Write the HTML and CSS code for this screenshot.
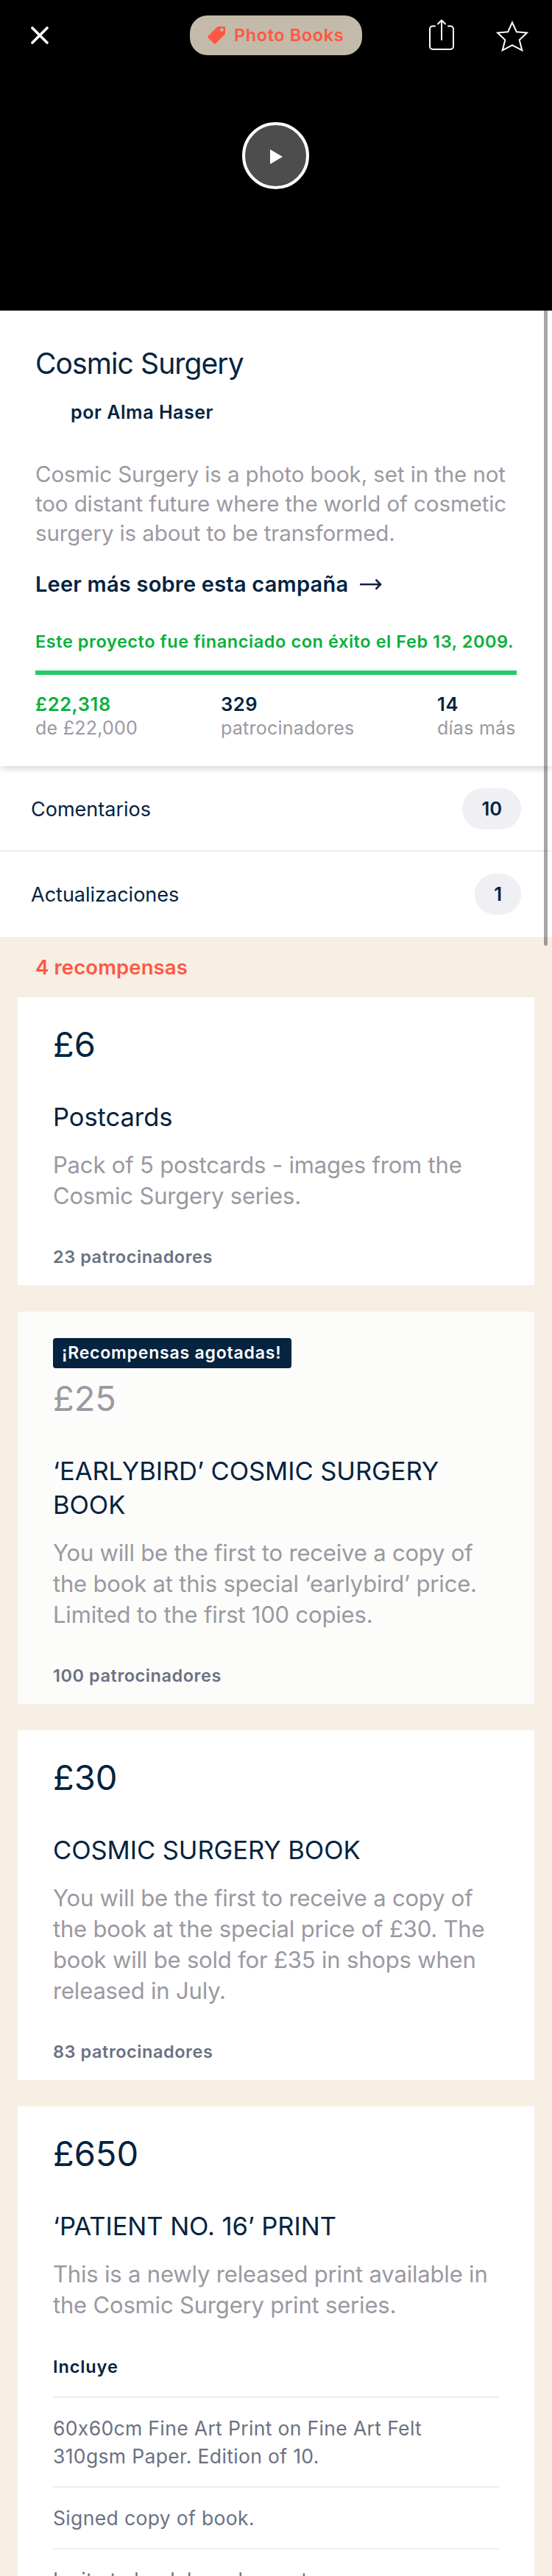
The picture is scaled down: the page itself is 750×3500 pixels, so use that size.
FILE: index.html
```html
<!DOCTYPE html>
<html lang="es">
<head>
<meta charset="utf-8">
<title>Cosmic Surgery</title>
<link rel="stylesheet" href="styles.css">
</head>
<body>
<div class="page">
  <header class="hero">
    <nav class="toolbar">
      <svg class="icon-close" viewBox="0 0 24 24"><path d="M2 2L22 22M22 2L2 22"/></svg>
      <div class="category">
        <svg class="icon-tag" viewBox="0 0 24 24"><path fill-rule="evenodd" d="M13.8 0H23a1 1 0 0 1 1 1v9.2L10.7 23.5a1.2 1.2 0 0 1-1.7 0L.5 15a1.2 1.2 0 0 1 0-1.7zM19.5 2.2a2.3 2.3 0 1 0 0 4.6 2.3 2.3 0 0 0 0-4.6z"/></svg>
        <span class="category-name">Photo Books</span>
      </div>
      <div class="actions">
        <svg class="icon-share" viewBox="0 0 34 42"><path d="M8 9.500H5a4 4 0 0 0-4 4V37a4 4 0 0 0 4 4h24a4 4 0 0 0 4-4V13.500a4 4 0 0 0-4-4h-3M17 28V1.500M12 6.500l5-5 5 5"/></svg>
        <svg class="icon-star" viewBox="0 0 44 42"><path d="M22 2.500L27.800 15.200 42 16.500 31.700 26.200 35.300 40.300 22 33.300 8.700 40.300 12.300 26.200 2 16.500 16.200 15.200z"/></svg>
      </div>
    </nav>
    <div class="play"><svg class="icon-play" viewBox="0 0 17 20"><path d="M0 0L17 10 0 20z"/></svg></div>
  </header>

  <section class="summary">
    <h1 class="title">Cosmic Surgery</h1>
    <p class="author">por Alma Haser</p>
    <p class="blurb">Cosmic Surgery is a photo book, set in the not<br>too distant future where the world of cosmetic<br>surgery is about to be transformed.</p>
    <div class="more"><span>Leer más sobre esta campaña</span><svg class="icon-arrow" viewBox="0 0 30 20"><path d="M0 10H28M21.500 3.500l6.500 6.500-6.500 6.500"/></svg></div>
    <p class="funded">Este proyecto fue financiado con éxito el Feb 13, 2009.</p>
    <div class="progress"></div>
    <div class="stats">
      <div><div class="value pledged">£22,318</div><div class="label">de £22,000</div></div>
      <div><div class="value">329</div><div class="label">patrocinadores</div></div>
      <div><div class="value">14</div><div class="label">días más</div></div>
    </div>
  </section>

  <div class="row"><span>Comentarios</span><span class="count">10</span></div>
  <div class="row"><span>Actualizaciones</span><span class="count">1</span></div>

  <section class="rewards">
    <h2 class="rewards-title">4 recompensas</h2>
    <div class="cards">
      <article class="card">
        <div class="price">£6</div>
        <h3 class="name">Postcards</h3>
        <p class="text">Pack of 5 postcards - images from the<br>Cosmic Surgery series.</p>
        <p class="backers">23 patrocinadores</p>
      </article>
      <article class="card gone">
        <span class="flag">¡Recompensas agotadas!</span>
        <div class="price">£25</div>
        <h3 class="name">‘EARLYBIRD’ COSMIC SURGERY<br>BOOK</h3>
        <p class="text">You will be the first to receive a copy of<br>the book at this special ‘earlybird’ price.<br>Limited to the first 100 copies.</p>
        <p class="backers">100 patrocinadores</p>
      </article>
      <article class="card">
        <div class="price">£30</div>
        <h3 class="name">COSMIC SURGERY BOOK</h3>
        <p class="text">You will be the first to receive a copy of<br>the book at the special price of £30. The<br>book will be sold for £35 in shops when<br>released in July.</p>
        <p class="backers">83 patrocinadores</p>
      </article>
      <article class="card">
        <div class="price">£650</div>
        <h3 class="name">‘PATIENT NO. 16’ PRINT</h3>
        <p class="text">This is a newly released print available in<br>the Cosmic Surgery print series.</p>
        <h4 class="includes">Incluye</h4>
        <ul class="items">
          <li>60x60cm Fine Art Print on Fine Art Felt<br>310gsm Paper. Edition of 10.</li>
          <li>Signed copy of book.</li>
          <li>Invite to book launch event.</li>
        </ul>
      </article>
    </div>
  </section>
  <div class="scrollbar"></div>
</div>
</body>
</html>
```
FILE: styles.css
```css
* { box-sizing: border-box; margin: 0; padding: 0; }
body { width: 750px; height: 3500px; overflow: hidden; background: #f7efe4; }
.page {
  position: relative;
  width: 750px;
  height: 3500px;
  overflow: hidden;
  font-family: Inter, "Liberation Sans", sans-serif;
  font-feature-settings: "calt" 0;
  color: #03233f;
  white-space: nowrap;
}
svg { display: block; flex: none; }

.hero { height: 422px; background: #000; display: flex; flex-direction: column; align-items: center; }
.toolbar { width: 100%; height: 96px; padding: 0 32px 0 42px; display: grid; grid-template-columns: 216px 234px 1fr; align-items: center; }
.icon-close { width: 24px; height: 24px; fill: none; stroke: #fff; stroke-width: 3.6; stroke-linecap: round; }
.category { height: 54px; border-radius: 24px; background: #c3baa9; color: #ff5744; display: flex; align-items: center; padding-left: 24px; gap: 12px; }
.icon-tag { width: 24px; height: 24px; fill: #ff5744; }
.category-name { font-size: 23.5px; font-weight: 600; letter-spacing: .6px; line-height: 30px; }
.actions { display: flex; justify-content: flex-end; gap: 57px; }
.icon-share { width: 34px; height: 42px; fill: none; stroke: #fff; stroke-width: 2; stroke-linecap: round; stroke-linejoin: round; }
.icon-star { width: 44px; height: 42px; margin-top: 2px; fill: none; stroke: #fff; stroke-width: 2; }
.play { width: 91px; height: 91px; margin: 70px 1px 0 0; border: 4px solid #fff; border-radius: 50%; background: #4d4d4d; display: flex; align-items: center; justify-content: center; padding: 3px 0 0 2px; }
.icon-play { width: 17px; height: 20px; fill: #fff; }

.summary { position: relative; height: 619px; padding: 48px 48px 0; background: #fff; box-shadow: 0 2px 10px rgba(0,0,0,.2); }
.title { font-size: 39px; font-weight: 400; line-height: 48px; letter-spacing: -.9px; }
.author { margin-top: 26px; padding-left: 48px; font-size: 25px; font-weight: 600; line-height: 32px; letter-spacing: .55px; }
.blurb { margin-top: 48px; font-size: 29.5px; line-height: 40px; letter-spacing: -.1px; color: #9b99a2; }
.more { display: flex; align-items: center; gap: 16px; margin-top: 30px; font-size: 29px; font-weight: 600; line-height: 40px; letter-spacing: .22px; }
.icon-arrow { width: 30px; height: 20px; fill: none; stroke: #03233f; stroke-width: 2.6; }
.funded { margin-top: 43px; font-size: 23.5px; font-weight: 600; line-height: 30px; letter-spacing: .57px; color: #0ab03c; }
.progress { height: 6px; margin-top: 24px; background: #25cb68; }
.stats { display: grid; grid-template-columns: 252px 294px 1fr; margin-top: 24px; font-size: 25px; line-height: 32px; }
.value { font-size: 25.5px; font-weight: 600; letter-spacing: .6px; }
.pledged { color: #0ab03c; }
.label { letter-spacing: .25px; color: #9b99a2; }

.row { display: flex; align-items: center; justify-content: space-between; height: 114px; padding: 2px 42px 0; background: #fff; font-size: 27px; }
.row + .row { height: 118px; padding-top: 0; border-top: 2px solid #ededee; }
.count { height: 56px; padding: 0 26px; border-radius: 28px; background: #efeff4; font-size: 25.5px; font-weight: 600; line-height: 56px; }

.rewards { padding: 23px 24px 0; background: #f7efe4; }
.rewards-title { padding-left: 24px; font-size: 27.5px; font-weight: 600; line-height: 36px; letter-spacing: .1px; color: #ff5744; }
.cards { display: flex; flex-direction: column; gap: 36px; margin-top: 23px; }
.card { padding: 36px 48px 23px; background: #fff; }
.gone { background: #fcfcfa; }
.flag { display: block; width: 324px; height: 41px; margin-bottom: 13px; padding-left: 12px; border-radius: 4px; background: #06233f; color: #fff; font-size: 23px; font-weight: 600; line-height: 41px; letter-spacing: .8px; }
.price { font-size: 47px; line-height: 56px; }
.gone .price { color: #9b99a2; }
.name { margin-top: 48px; font-size: 34.5px; font-weight: 400; line-height: 46px; letter-spacing: -.05px; }
.text { margin-top: 21px; font-size: 31px; line-height: 42px; letter-spacing: -.18px; color: #9b99a2; }
.backers { margin-top: 47px; font-size: 23.5px; font-weight: 600; line-height: 30px; letter-spacing: .55px; color: #6b7183; }
.includes { margin-top: 48px; font-size: 23.5px; font-weight: 600; line-height: 30px; letter-spacing: .9px; }
.items { list-style: none; margin-top: 25px; font-size: 26.5px; line-height: 38px; letter-spacing: .35px; color: #6b7183; }
.items li { padding: 22px 0; border-top: 2px solid #ededee; }

.scrollbar { position: absolute; left: 739px; top: 422px; width: 5px; height: 863px; border-radius: 0 0 3px 3px; background: rgba(0,0,0,.35); }
```
